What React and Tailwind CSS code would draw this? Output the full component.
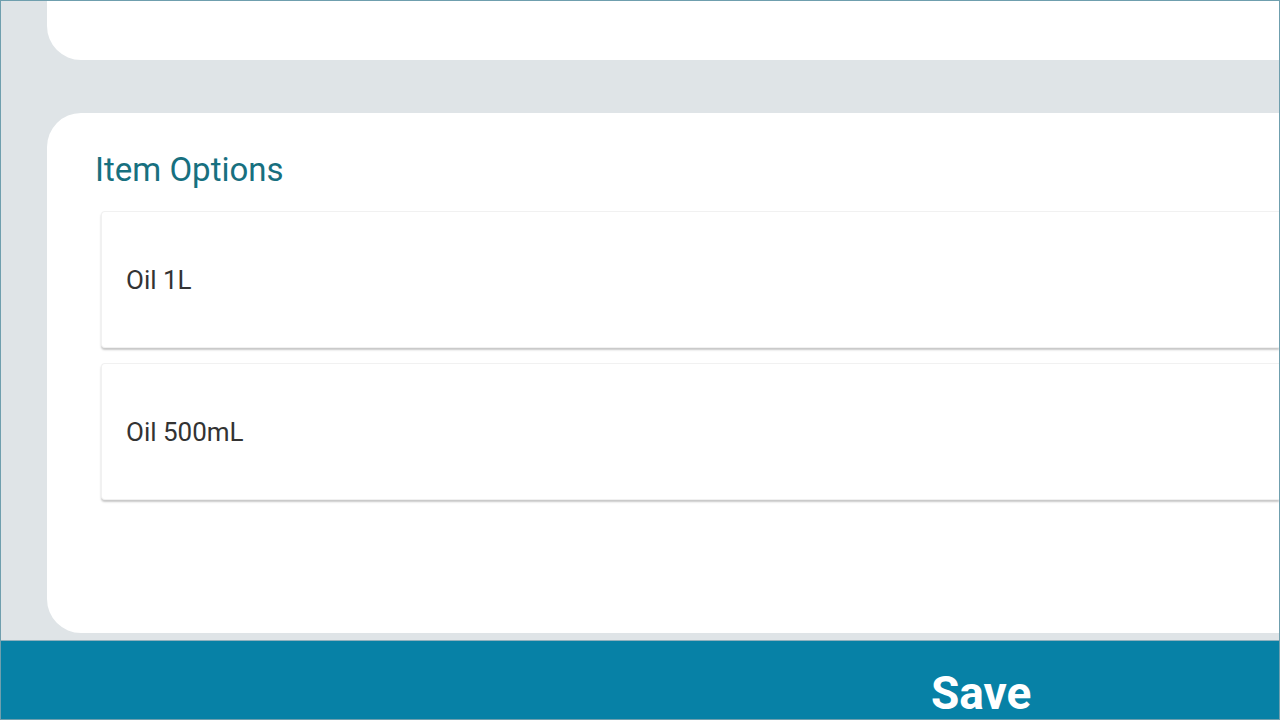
const options = ["Oil 1L", "Oil 500mL"];

function OptionCard({ label }) {
  return (
    <div className="ml-[6px] h-[137px] flex items-center pl-[24px] pt-[2px] bg-white rounded-l-[4px] border border-r-0 border-[#f1f1f1] shadow-[0_2px_2px_rgba(0,0,0,0.22)]">
      <span className="text-[26px] text-[#333333]">{label}</span>
    </div>
  );
}

function App() {
  return (
    <main
      className="w-[1280px] h-[720px] overflow-hidden flex flex-col bg-[#dfe4e7] border border-[#6f9fae]"
      style={{ fontFamily: "Roboto, 'Noto Sans', sans-serif" }}
    >
      <div className="flex-1 pl-[46px]">
        <section className="h-[59px] bg-white rounded-bl-[34px]"></section>
        <section className="mt-[53px] h-[520px] bg-white rounded-l-[34px] pt-[38px] pl-[48px]">
          <h2 className="text-[33px] leading-[38px] text-[#17707f]">Item Options</h2>
          <div className="mt-[22px] flex flex-col gap-[15px]">
            {options.map((o) => (
              <OptionCard key={o} label={o} />
            ))}
          </div>
        </section>
      </div>
      <footer className="h-[79px] shrink-0 bg-[#0781a6] border-t border-[#8fb0bd] pl-[930px] pt-[29px]">
        <span className="text-[46px] leading-none font-bold text-white">Save</span>
      </footer>
    </main>
  );
}

export default App;
